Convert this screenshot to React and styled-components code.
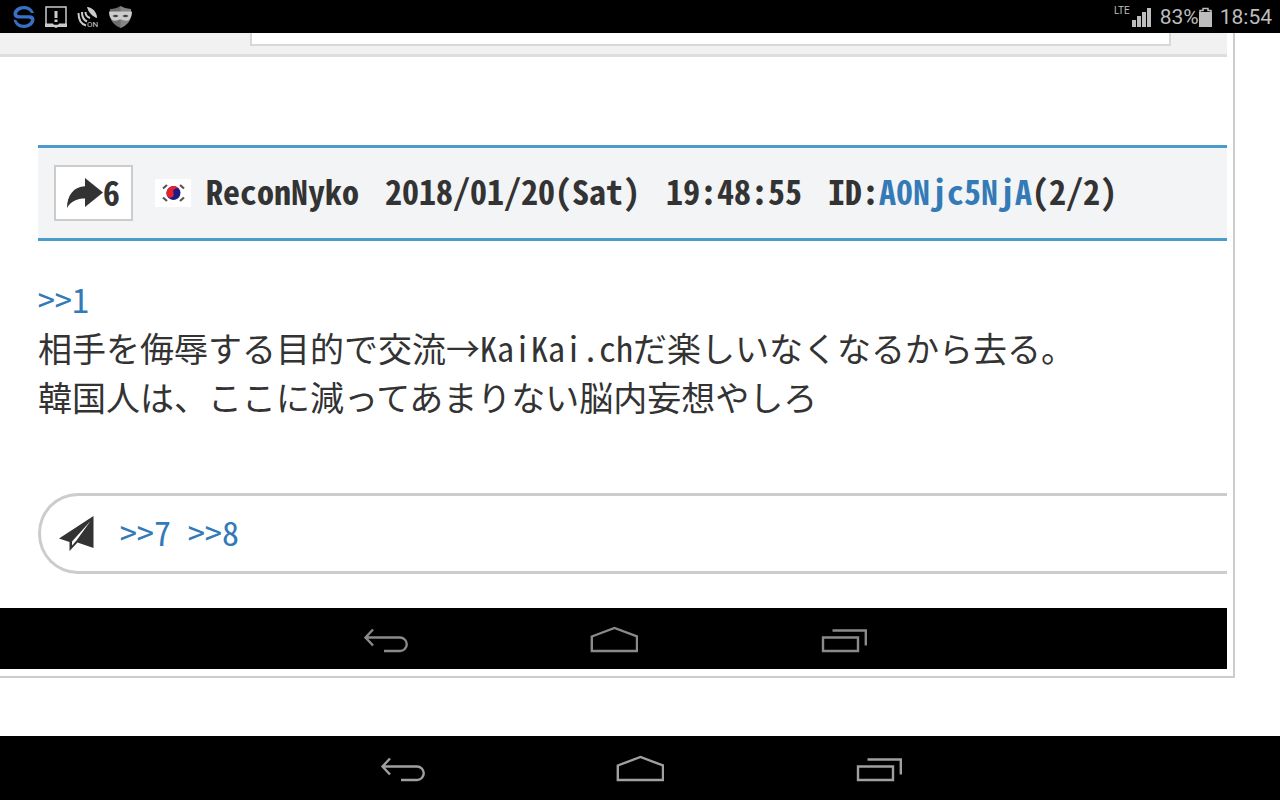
import React from 'react';
import styled, { createGlobalStyle } from 'styled-components';

const GlobalStyle = createGlobalStyle`
    *{
        box-sizing:border-box;
    }
    body{
        margin:0;
        background-color:white;
    }
    button{
        font:inherit;
        color:inherit;
        cursor:pointer;
    }
`

const BackIcon = () => (
    <svg width="48" height="28" viewBox="0 0 48 28" fill="none" stroke="currentColor" strokeWidth="2.4">
        <path d="M12 4.500L4.500 12.500L12 20.500M4.500 12.500H39A6.500 6.500 0 0 1 39 26H23" />
    </svg>
)

const HomeIcon = () => (
    <svg width="48" height="28" viewBox="0 0 48 28" fill="none" stroke="currentColor" strokeWidth="2.4">
        <path d="M1.800 11.500L24.500 3L47 11.500V26H1.800Z" />
    </svg>
)

const RecentsIcon = () => (
    <svg width="48" height="28" viewBox="0 0 48 28" fill="none" stroke="currentColor" strokeWidth="2.4">
        <path d="M4 12.500H39V26H4Z" />
        <path d="M13.500 5.500H46.800V20.500" />
    </svg>
)

const ShareIcon = () => (
    <svg width="36" height="30" viewBox="0 0 36 30" fill="currentColor">
        <path d="M0 30C0 17 7 8.500 18 8.200V0L36 14.500L18 29V20.500C10 20.500 4 23 0 30Z" />
    </svg>
)

const SendIcon = () => (
    <svg width="35" height="36" viewBox="0 0 35 36">
        <path d="M34.500 0L0 22.500L10.500 26V35L18.500 26.500L34.500 32Z" fill="currentColor" />
        <path d="M31.500 5L13 25.500V29.500L17.500 24.500Z" fill="#fff" />
    </svg>
)

const KoreaFlag = () => (
    <svg width="36" height="28" viewBox="0 0 36 28" role="img" aria-label="Korea">
        <rect width="36" height="28" fill="#fff" />
        <g transform="rotate(-20 18.5 14)">
            <circle cx="18.500" cy="14" r="7" fill="#1b1b86" />
            <path d="M11.500 14A7 7 0 0 1 25.500 14A3.500 3.500 0 0 0 18.500 14A3.500 3.500 0 0 1 11.500 14Z" fill="#e8202c" />
        </g>
        <path d="M8 9.500L12 6M25 6L29 9.500M8 18.500L12 22M25 22L29 18.500" stroke="#555" strokeWidth="2.2" />
    </svg>
)

const SwiftIcon = () => (
    <svg width="22" height="22" viewBox="0 0 22 22" fill="#3a70c4">
        <path d="M21 7C19.500 2.500 15.500 0 11 0C5 0 0.500 3.500 0.500 8C0.500 11 3 12.500 6 12.500H15C17 12.500 18 13.300 18 14.500C17 17 14 18.800 11 18.800C7 18.800 4.500 17 3.200 14L0.500 13.500C1.500 18.500 5.500 22 11 22C17 22 21.500 18 21.500 13.500C21.500 10.500 19 9.200 16 9.200H7C5 9.200 4 8.500 4 7.500C5 5 8 3.300 11 3.300C14 3.300 16.500 4.500 18 7Z" />
    </svg>
)

const NoticeIcon = () => (
    <svg width="22" height="22" viewBox="0 0 22 22">
        <path d="M1 1H21V19.500H1Z" fill="none" stroke="#ccc" strokeWidth="1.500" />
        <path d="M0 17.500H8L9.500 20H12.500L14 17.500H22V21H13L11 22L9 21H0Z" fill="#ccc" />
        <path d="M9.500 5H12.500V12H9.500ZM9.500 13.500H12.500V16H9.500Z" fill="#ccc" />
    </svg>
)

const DishIcon = () => (
    <svg width="22" height="22" viewBox="0 0 22 22">
        <g fill="none" stroke="#ccc" strokeWidth="2">
            <path d="M1.500 7C1.500 13 4 18 9 19.500" />
            <path d="M5 6C5 11 6.500 14 10 15.500" />
            <path d="M8.500 6C8.500 9 10 11 13 12" />
        </g>
        <path d="M10 1C15 1 20 6 20 12C16 11 11 6 10 1Z" fill="#ccc" />
        <text x="10" y="21" fontFamily="Roboto, sans-serif" fontSize="8" fill="#ccc">ON</text>
    </svg>
)

const MaskIcon = () => (
    <svg width="23" height="22" viewBox="0 0 23 22">
        <path d="M1 3Q7 3 11.500 0Q16 3 22 3V10Q21 18 11.500 22Q2 18 1 10Z" fill="#6d6d6d" />
        <path d="M11.500 0Q16 3 22 3V10Q21 18 11.500 22Z" fill="#858585" />
        <path d="M0 5.500H23Q23 12 19 14.500Q14 15 12.500 13.500H10.500Q9 15 4 14.500Q0 12 0 5.500Z" fill="#ccc" />
        <path d="M3.500 10Q6.500 7.500 9.500 10Q6.500 12.500 3.500 10ZM19.500 10Q16.500 7.500 13.500 10Q16.500 12.500 19.500 10Z" fill="#444" />
    </svg>
)

const SignalIcon = () => (
    <svg width="20" height="20" viewBox="0 0 20 20" fill="#bdbdbd">
        <path d="M0 13H4V20H0ZM5 9H9V20H5ZM10 5H14V20H10ZM15 1H19V20H15Z" />
    </svg>
)

const BatteryIcon = () => (
    <svg width="13" height="20" viewBox="0 0 13 20">
        <path d="M1 5V3.500H4V1.500H9V3.500H12V5" fill="none" stroke="#bdbdbd" strokeWidth="1.500" />
        <path d="M0 5H13V20H0Z" fill="#bdbdbd" />
    </svg>
)

const NavButtons = () => (
    <>
        <NavButton aria-label="Back"><BackIcon /></NavButton>
        <NavButton aria-label="Home"><HomeIcon /></NavButton>
        <NavButton aria-label="Recent apps"><RecentsIcon /></NavButton>
    </>
)

export default function App() {
    return (
        <Screen>
            <GlobalStyle />
            <StatusBar>
                <Notifications>
                    <SwiftIcon />
                    <NoticeIcon />
                    <DishIcon />
                    <MaskIcon />
                </Notifications>
                <SystemInfo>
                    <Network>LTE</Network>
                    <SignalIcon />
                    <Battery>83%<BatteryIcon /></Battery>
                    <span>18:54</span>
                </SystemInfo>
            </StatusBar>
            <Content>
                <Frame>
                    <FormStrip>
                        <FormBox />
                    </FormStrip>
                    <Post>
                        <PostHeader>
                            <ReplyButton aria-label="Reply 6">
                                <ShareIcon />
                                <Label>6</Label>
                            </ReplyButton>
                            <KoreaFlag />
                            <PostInfo>
                                <span>ReconNyko</span>
                                <span>2018/01/20(Sat)</span>
                                <span>19:48:55</span>
                                <span>ID:<PostLink href="#id">A0Njc5NjA</PostLink>(2/2)</span>
                            </PostInfo>
                        </PostHeader>
                        <Message>
                            <PostLink href="#1">&gt;&gt;1</PostLink><br />
                            相手を侮辱する目的で交流→KaiKai.chだ楽しいなくなるから去る。<br />
                            韓国人は、ここに減ってあまりない脳内妄想やしろ
                        </Message>
                        <Replies>
                            <SendIcon />
                            <Label>
                                <PostLink href="#7">&gt;&gt;7</PostLink> <PostLink href="#8">&gt;&gt;8</PostLink>
                            </Label>
                        </Replies>
                    </Post>
                    <InnerNav><NavButtons /></InnerNav>
                </Frame>
            </Content>
            <NavBar><NavButtons /></NavBar>
        </Screen>
    )
}

const Screen = styled.div`
    min-height:100vh;
    display:flex;
    flex-direction:column;
    font-family:"Noto Sans CJK JP", sans-serif;
`

const StatusBar = styled.header`
    height:33px;
    padding:0 8px 0 13px;
    display:flex;
    justify-content:space-between;
    align-items:center;
    background-color:black;
    color:#bdbdbd;
    font-family:Roboto, sans-serif;
    font-size:21px;
`

const Notifications = styled.div`
    display:flex;
    align-items:center;
    gap:10px;
`

const SystemInfo = styled.div`
    display:flex;
    align-items:center;
    gap:8px;
    line-height:24px;
    svg{
        display:block;
    }
`

const Network = styled.span`
    align-self:flex-start;
    margin-right:-6px;
    font-family:"Liberation Sans Narrow", Roboto, sans-serif;
    font-size:10px;
    line-height:12px;
`

const Battery = styled.span`
    display:flex;
    align-items:center;
`

const Content = styled.main`
    flex:1;
    padding-right:45px;
`

const Frame = styled.section`
    padding:0 6px 7px 0;
    border-right:2px solid #ccc;
    border-bottom:2px solid #ccc;
`

const FormStrip = styled.div`
    height:24px;
    padding:0 56px 0 250px;
    background-color:#f1f1f1;
    border-bottom:3px solid #ddd;
`

const FormBox = styled.div`
    height:13px;
    background-color:white;
    border:2px solid #d8d8d8;
    border-top:none;
`

const Post = styled.article`
    padding:88px 0 34px 38px;
    color:#333;
    font-size:34px;
    line-height:49px;
    font-feature-settings:"hwid";
`

const PostHeader = styled.header`
    height:96px;
    padding-left:16px;
    display:flex;
    align-items:center;
    background-color:#f3f4f6;
    border-top:3px solid #4a9acb;
    border-bottom:3px solid #4a9acb;
    font-weight:bold;
    white-space:nowrap;
`

const Label = styled.span`
    padding-bottom:4px;
`

const PostInfo = styled.div`
    margin-left:15px;
    padding-bottom:6px;
    display:flex;
    gap:26px;
`

const ReplyButton = styled.button`
    height:56px;
    margin-right:22px;
    padding:0 11px;
    display:flex;
    align-items:center;
    background-color:white;
    border:2px solid #ccc;
    font-feature-settings:inherit;
`

const PostLink = styled.a`
    color:#337ab7;
    text-decoration:none;
`

const Message = styled.div`
    margin:33px 0 72px;
`

const Replies = styled.div`
    height:81px;
    padding-left:18px;
    display:flex;
    align-items:center;
    gap:26px;
    border:3px solid #ccc;
    border-right:none;
    border-radius:40px 0 0 40px;
`

const NavBar = styled.nav`
    height:64px;
    display:flex;
    justify-content:center;
    align-items:center;
    gap:190px;
    background-color:black;
    color:#a0a0a0;
`

const InnerNav = styled(NavBar)`
    height:61px;
    gap:181px;
    color:#8a8a8a;
`

const NavButton = styled.button`
    padding:0;
    display:flex;
    background:none;
    border:none;
`
